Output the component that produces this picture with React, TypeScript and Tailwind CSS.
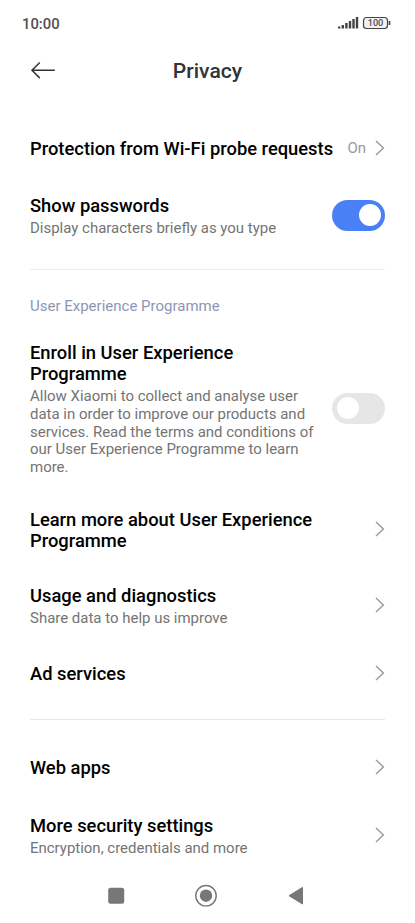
import React from "react";

const Chevron = () => (
  <svg width="10" height="16" viewBox="0 0 10 16" fill="none" stroke="#999" strokeWidth="1.4" className="shrink-0">
    <path d="M1 .9l7.400 7.100L1 15.100" />
  </svg>
);

const Toggle = ({ on = false }: { on?: boolean }) => (
  <div className={`flex h-[31px] w-[53px] shrink-0 items-center rounded-full px-[4.5px] ${on ? "justify-end bg-[#4a80f5]" : "justify-start bg-[#e6e6e6]"}`}>
    <div className="h-[22px] w-[22px] rounded-full bg-white" />
  </div>
);

function Row({ lines, sub, box, right }: { lines: string[]; sub?: string[]; box: string; right: React.ReactNode }) {
  return (
    <div className={`flex items-center justify-between ${box}`}>
      <div className={`whitespace-nowrap ${sub ? "pt-[3px]" : "pt-[2px]"}`}>
        {lines.map((l) => (
          <div key={l} className="text-[18.35px] leading-[21.5px] font-medium text-black">{l}</div>
        ))}
        {sub && (
          <div className={sub.length > 1 ? "pt-[3.500px] pb-[0.500px]" : "pt-[4px]"}>
            {sub.map((l) => (
              <div key={l} className="text-[14.97px] leading-[17.7px] text-[#747474]">{l}</div>
            ))}
          </div>
        )}
      </div>
      {right}
    </div>
  );
}

export default function App() {
  return (
    <div className="flex h-[923px] w-[415px] flex-col overflow-hidden bg-white font-['Roboto',sans-serif]">
      <div className="flex h-[46px] shrink-0 items-center justify-between pl-[22px] pr-[24px] text-[14.8px] font-medium text-[#505050]">
        <span className="pt-[2px]">10:00</span>
        <svg width="53" height="14" viewBox="0 0 53 14" className="shrink-0">
          <path d="M1.200 12.500v-2M4.800 12.500V9M8.400 12.500V7M12 12.500V5M15.500 12.500V3M19 12.500V1" stroke="#444" strokeWidth="2.400" />
          <rect x="25.500" y="1.500" width="24" height="11" rx="3" fill="#f1f1f1" stroke="#444" strokeWidth="1.200" />
          <text x="37.500" y="10.300" fontSize="9.200" fontWeight="500" textAnchor="middle" fill="#505050">100</text>
          <path d="M51.500 5v4" stroke="#444" strokeWidth="1.600" />
        </svg>
      </div>
      <header className="grid h-[48px] shrink-0 grid-cols-[1fr_auto_1fr] items-center px-[30px]">
        <svg width="26" height="18" viewBox="0 0 26 18" fill="none" stroke="#333" strokeWidth="1.5">
          <path d="M24.800 9.300H2M9.800 1.500L2 9.300l7.800 7.800" />
        </svg>
        <h1 className="pt-[2px] text-[21.1px] font-medium text-[#333]">Privacy</h1>
      </header>
      <main className="flex shrink-0 flex-col px-[30px] pt-[25px]">
        <Row lines={["Protection from Wi-Fi probe requests"]} box="h-[57px]" right={<div className="flex items-center gap-[9px] text-[15px] text-[#999]"><span className="pt-[2px]">On</span><Chevron /></div>} />
        <Row lines={["Show passwords"]} sub={["Display characters briefly as you type"]} box="h-[78px]" right={<Toggle on />} />
        <div className="mt-[15px] h-px bg-[#ececec]" />
        <h2 className="pt-[26px] pb-px text-[15px] leading-[20px] text-[#8f96b3]">User Experience Programme</h2>
        <Row lines={["Enroll in User Experience", "Programme"]} sub={["Allow Xiaomi to collect and analyse user", "data in order to improve our products and", "services. Read the terms and conditions of", "our User Experience Programme to learn", "more."]} box="h-[182px]" right={<Toggle />} />
        <Row lines={["Learn more about User Experience", "Programme"]} box="h-[60px]" right={<Chevron />} />
        <Row lines={["Usage and diagnostics"]} sub={["Share data to help us improve"]} box="h-[92px]" right={<Chevron />} />
        <Row lines={["Ad services"]} box="h-[43px]" right={<Chevron />} />
        <div className="mt-[25px] h-px bg-[#e8e8e8]" />
        <Row lines={["Web apps"]} box="mt-[18px] h-[58px]" right={<Chevron />} />
        <Row lines={["More security settings"]} sub={["Encryption, credentials and more"]} box="h-[78px]" right={<Chevron />} />
      </main>
      <nav className="flex h-[43px] shrink-0 items-center pl-[102px]">
        <svg width="210" height="24" viewBox="0 0 210 24" fill="#777">
          <rect x="6.200" y="3.700" width="16" height="16" rx="2.500" />
          <circle cx="104" cy="11.700" r="10.200" fill="none" stroke="#777" strokeWidth="1.400" />
          <circle cx="104" cy="11.700" r="6.200" />
          <path d="M187 11.700l13.500-8.300v16.600z" stroke="#777" strokeWidth="1" strokeLinejoin="round" />
        </svg>
      </nav>
    </div>
  );
}
